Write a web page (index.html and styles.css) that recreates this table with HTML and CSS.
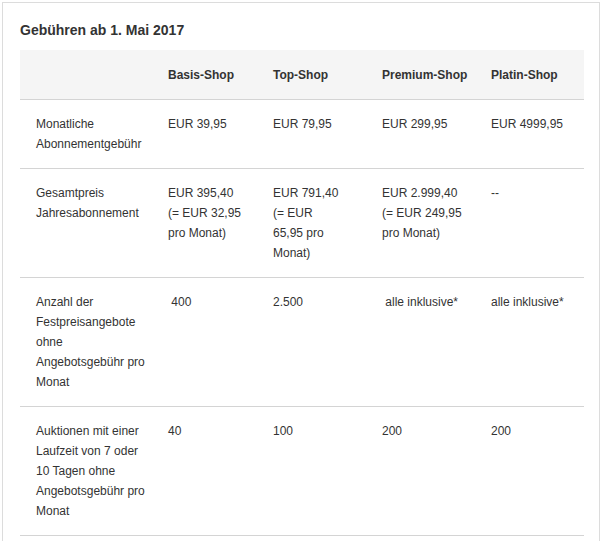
FILE: index.html
```html
<!DOCTYPE html>
<html lang="de">
<head>
<meta charset="utf-8">
<link rel="stylesheet" href="styles.css">
</head>
<body>
<div class="card">
  <h2 class="title">Gebühren ab 1. Mai 2017</h2>
  <table class="fees">
    <colgroup>
      <col class="c-label"><col class="c-basis"><col class="c-top"><col class="c-prem"><col class="c-plat">
    </colgroup>
    <thead>
      <tr><th></th><th>Basis-Shop</th><th>Top-Shop</th><th>Premium-Shop</th><th>Platin-Shop</th></tr>
    </thead>
    <tbody>
      <tr><td>Monatliche Abonnementgebühr</td><td>EUR 39,95</td><td>EUR 79,95</td><td>EUR 299,95</td><td>EUR 4999,95</td></tr>
      <tr><td>Gesamtpreis Jahresabonnement</td><td>EUR 395,40 (=&nbsp;EUR 32,95 pro Monat)</td><td>EUR 791,40 (=&nbsp;EUR 65,95&nbsp;pro Monat)</td><td>EUR 2.999,40 (=&nbsp;EUR 249,95 pro Monat)</td><td>--</td></tr>
      <tr><td>Anzahl der Festpreisangebote ohne Angebotsgebühr pro Monat</td><td>&nbsp;400</td><td>2.500</td><td>&nbsp;alle inklusive*</td><td>alle inklusive*</td></tr>
      <tr><td>Auktionen mit einer Laufzeit von 7 oder 10 Tagen ohne Angebotsgebühr pro Monat</td><td>40</td><td>100</td><td>200</td><td>200</td></tr>
    </tbody>
  </table>
</div>
</body>
</html>
```
FILE: styles.css
```css
html, body { margin: 0; padding: 0; background: #fff; }
body { padding: 2px 0 0 2px; font-family: "Liberation Sans", Arial, Helvetica, sans-serif; color: #333; }
.card {
  width: 598px;
  box-sizing: border-box;
  border: 1px solid #dcdcdc;
  border-bottom: none;
  padding: 14px 13px 0 17px;
  min-height: 560px;
}
.title {
  margin: 0 0 7px;
  font-size: 14px;
  font-weight: bold;
  line-height: 26px;
  color: #333;
}
.fees {
  width: 564px;
  border-collapse: collapse;
  table-layout: fixed;
  font-size: 12px;
  line-height: 20px;
}
.c-label { width: 132px; }
.c-basis { width: 105px; }
.c-top { width: 109px; }
.c-prem { width: 109px; }
.c-plat { width: 109px; }
.fees th, .fees td {
  text-align: left;
  vertical-align: top;
  padding: 14px 12px 14px 16px;
}
.fees th {
  background: #f5f5f5;
  font-weight: bold;
  padding-top: 15px;
  padding-right: 4px;
  padding-bottom: 14px;
  border-bottom: 1px solid #d4d4d4;
}
.fees td { border-bottom: 1px solid #d4d4d4; }
.fees td:first-child { padding-right: 4px; }
```
